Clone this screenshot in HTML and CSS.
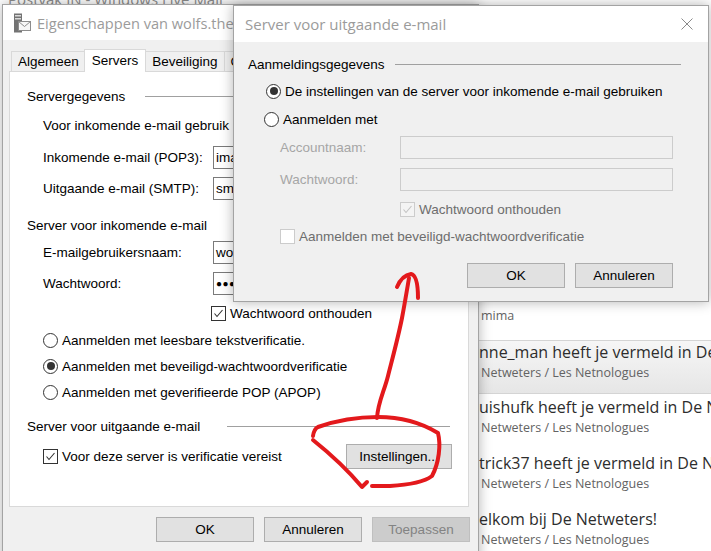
FILE: index.html
```html
<!DOCTYPE html>
<html lang="nl">
<head>
<meta charset="UTF-8" />
<title>Server voor uitgaande e-mail</title>
<link rel="stylesheet" href="styles.css">
</head>
<body>

<div class="mail-app">
  <div class="mail-title">Postvak IN - Windows Live Mail</div>
  <div class="feed">
    <div class="feed-item first"><div class="feed-sub">mima</div></div>
    <div class="feed-item hover">
      <div class="feed-title">nne_man heeft je vermeld in De</div>
      <div class="feed-sub">Netweters / Les Netnologues</div>
    </div>
    <div class="feed-item">
      <div class="feed-title">uishufk heeft je vermeld in De N</div>
      <div class="feed-sub">Netweters / Les Netnologues</div>
    </div>
    <div class="feed-item">
      <div class="feed-title">trick37 heeft je vermeld in De N</div>
      <div class="feed-sub">Netweters / Les Netnologues</div>
    </div>
    <div class="feed-item">
      <div class="feed-title">elkom bij De Netweters!</div>
      <div class="feed-sub">Netweters / Les Netnologues</div>
    </div>
  </div>
</div>

<div class="win props">
  <div class="titlebar">
    <svg class="app-icon" width="18" height="20" viewBox="0 0 18 20">
      <rect x="1" y="0.5" width="8" height="19" fill="#737373"/>
      <rect x="2" y="2" width="6" height="1.5" fill="#dadada"/>
      <rect x="2" y="5" width="6" height="1.5" fill="#dadada"/>
      <rect x="5.5" y="8.5" width="12" height="9" fill="#f6f6f6" stroke="#8c8c8c"/>
      <polyline points="5.5,8.5 11.5,13.5 17.5,8.5" fill="none" stroke="#8c8c8c"/>
    </svg>
    <span>Eigenschappen van wolfs.theo@telenet.be</span>
  </div>
  <div class="props-body">
    <div class="tabs">
      <div class="tab">Algemeen</div>
      <div class="tab active">Servers</div>
      <div class="tab">Beveiliging</div>
      <div class="tab">Geavanceerd</div>
    </div>
    <div class="tab-panel">
      <div class="group-head"><span>Servergegevens</span><span class="rule"></span></div>
      <div class="row indent mt5">Voor inkomende e-mail gebruik ik een POP3-server.</div>
      <div class="row indent mt8">
        <span class="label">Inkomende e-mail (POP3):</span>
        <span class="textbox">imap.telenet.be</span>
      </div>
      <div class="row indent mt7">
        <span class="label">Uitgaande e-mail (SMTP):</span>
        <span class="textbox">smtp.telenet.be</span>
      </div>
      <div class="group-head mt13"><span>Server voor inkomende e-mail</span></div>
      <div class="row indent mt3">
        <span class="label">E-mailgebruikersnaam:</span>
        <span class="textbox">wolfs.theo</span>
      </div>
      <div class="row indent mt7">
        <span class="label">Wachtwoord:</span>
        <span class="textbox dots">●●●●●●●●</span>
      </div>
      <div class="row remember mt6">
        <span class="check"><svg width="13" height="13" viewBox="0 0 13 13"><polyline points="2.5,6.5 5,9.5 10.5,3" /></svg></span>
        Wachtwoord onthouden
      </div>
      <div class="row indent mt3"><span class="radio"></span>Aanmelden met leesbare tekstverificatie.</div>
      <div class="row indent mt2"><span class="radio on"></span>Aanmelden met beveiligd-wachtwoordverificatie</div>
      <div class="row indent mt2"><span class="radio"></span>Aanmelden met geverifieerde POP (APOP)</div>
      <div class="group-head mt10"><span>Server voor uitgaande e-mail</span><span class="rule wide"></span></div>
      <div class="row indent mt6">
        <span class="check"><svg width="13" height="13" viewBox="0 0 13 13"><polyline points="2.5,6.5 5,9.5 10.5,3" /></svg></span>
        Voor deze server is verificatie vereist
        <button class="btn settings">Instellingen...</button>
      </div>
    </div>
    <div class="btn-row props-buttons">
      <button class="btn">OK</button>
      <button class="btn">Annuleren</button>
      <button class="btn" disabled>Toepassen</button>
    </div>
  </div>
</div>

<div class="win smtp">
  <div class="titlebar">
    <span>Server voor uitgaande e-mail</span>
    <svg class="close" width="12" height="12" viewBox="0 0 12 12">
      <path d="M0.5 0.5 L11.5 11.5 M11.5 0.5 L0.5 11.5" stroke="#8a8a8a" stroke-width="1"/>
    </svg>
  </div>
  <div class="smtp-body">
    <div class="group-head"><span>Aanmeldingsgegevens</span><span class="rule"></span></div>
    <div class="row opt-a mt3"><span class="radio on"></span>De instellingen van de server voor inkomende e-mail gebruiken</div>
    <div class="row opt-b mt4"><span class="radio"></span>Aanmelden met</div>
    <div class="field mt5">
      <span class="label">Accountnaam:</span>
      <span class="textbox off"></span>
    </div>
    <div class="field mt9">
      <span class="label">Wachtwoord:</span>
      <span class="textbox off"></span>
    </div>
    <div class="row dim keep mt6">
      <span class="check off"><svg width="13" height="13" viewBox="0 0 13 13"><polyline points="2.5,6.5 5,9.5 10.5,3" /></svg></span>
      Wachtwoord onthouden
    </div>
    <div class="row dim spa mt3">
      <span class="check blank"></span>
      Aanmelden met beveiligd-wachtwoordverificatie
    </div>
    <div class="btn-row mt15">
      <button class="btn">OK</button>
      <button class="btn">Annuleren</button>
    </div>
  </div>
</div>

<svg class="scribble" width="711" height="551" viewBox="0 0 711 551">
  <g fill="none" stroke="#e3191c" stroke-width="4" stroke-linecap="round" stroke-linejoin="round">
    <path d="M377 418 C378 402 384 392 388 376 C392 360 398 338 402 318 C405 302 407 290 409 278"/>
    <path d="M397 287 C400 280 404 275 411 274 C416 275 418 283 418 298"/>
    <path d="M313 436 Q314 429 318 427 C335 421 356 417 378 417 C400 417 420 422 438 433 C441 445 439 463 432 476 C424 482 408 485 390 486 L372 486"/>
    <path d="M313 440 C328 452 346 468 362 487 L367 482"/>
  </g>
</svg>

</body>
</html>
```

FILE: styles.css
```css
* {
  box-sizing: border-box;
}

body {
  margin: 0;
  width: 711px;
  height: 551px;
  position: relative;
  overflow: hidden;
  background: #fff;
  font-family: 'Liberation Sans', Arial, sans-serif;
  font-size: 13.5px;
  color: #000;
}

/* mail client in the background */
.mail-app {
  position: absolute;
  top: 0; left: 0; right: 0; bottom: 0;
  background: #fff;
}
.mail-title {
  position: absolute;
  top: -11px;
  left: 8px;
  font-family: 'Open Sans', sans-serif;
  font-size: 15px;
  color: #8c8c8c;
}
.feed {
  position: absolute;
  left: 478px;
  top: 302px;
  right: 0;
  overflow: hidden;
  font-family: 'Open Sans', sans-serif;
  white-space: nowrap;
}
.feed-item {
  padding: 2px 0 12px 1px;
}
.feed-item.first {
  padding: 4px 0 14px 1px;
}
.feed-item.hover {
  padding: 0 0 10px 1px;
  border-top: 1px solid #d4d4d4;
  border-bottom: 1px solid #d4d4d4;
  background: linear-gradient(#f6f6f6, #e6e6e6);
}
.feed-title {
  height: 22px;
  line-height: 22px;
  font-size: 16px;
  color: #2d2d2d;
  overflow: hidden;
}
.feed-sub {
  height: 20px;
  line-height: 20px;
  font-size: 12.5px;
  color: #636363;
  padding-left: 2px;
}

/* dialog windows */
.win {
  position: absolute;
  background: #f0f0f0;
  border: 1px solid #a3a3a3;
  box-shadow: 0 0 12px rgba(0, 0, 0, 0.3);
}
.props {
  left: 2px;
  top: 4px;
  width: 477px;
  height: 560px;
  z-index: 1;
}
.smtp {
  left: 233px;
  top: 5px;
  width: 476px;
  height: 297px;
  z-index: 2;
}

.titlebar {
  display: flex;
  align-items: center;
  background: #fff;
  font-family: 'Open Sans', sans-serif;
  font-size: 15px;
  color: #9b9b9b;
  white-space: nowrap;
  overflow: hidden;
}
.props .titlebar {
  height: 35px;
  padding-left: 10px;
  gap: 6px;
  font-size: 14.6px;
}
.smtp .titlebar {
  height: 36px;
  padding: 0 15px 0 11px;
  justify-content: space-between;
}
.app-icon,
.close {
  flex: none;
}

/* tabs */
.props-body {
  padding: 9px 9px 0 6px;
}
.tabs {
  display: flex;
  align-items: flex-end;
  height: 22px;
  padding-left: 2px;
  position: relative;
  z-index: 1;
}
.tab {
  height: 20px;
  padding: 0 6px;
  display: flex;
  align-items: center;
  border: 1px solid #d9d9d9;
  border-bottom: none;
  background: #f0f0f0;
  margin-right: -1px;
  white-space: nowrap;
}
.tab.active {
  height: 23px;
  margin: 0 -1px -1px -1px;
  padding: 0 7px 2px;
  background: #fff;
  position: relative;
  z-index: 1;
}

.tab-panel {
  height: 436px;
  background: #fff;
  border: 1px solid #d9d9d9;
  padding: 12px 15px 0 17px;
}

/* rows */
.row,
.group-head {
  display: flex;
  align-items: center;
  height: 24px;
  white-space: nowrap;
}
.rule {
  flex: 1;
  height: 1px;
  background: #a0a0a0;
}
.tab-panel .rule {
  margin: 0 3px 0 20px;
}
.tab-panel .rule.wide {
  margin-left: 27px;
}
.indent {
  margin-left: 16px;
}
.remember {
  margin-left: 184px;
}

.mt2 { margin-top: 2px; }
.mt3 { margin-top: 3px; }
.mt4 { margin-top: 4px; }
.mt5 { margin-top: 5px; }
.mt6 { margin-top: 6px; }
.mt7 { margin-top: 7px; }
.mt8 { margin-top: 8px; }
.mt9 { margin-top: 9px; }
.mt10 { margin-top: 10px; }
.mt13 { margin-top: 13px; }
.mt15 { margin-top: 15px; }

.label {
  width: 170px;
  flex: none;
}
.textbox {
  width: 240px;
  height: 23px;
  flex: none;
  display: flex;
  align-items: center;
  padding: 0 2px;
  border: 1px solid #7a7a7a;
  background: #fff;
  overflow: hidden;
}
.textbox.dots {
  font-size: 10px;
  letter-spacing: 0.5px;
}

/* radio buttons and check boxes */
.radio {
  width: 15px;
  height: 15px;
  flex: none;
  margin-right: 4px;
  border: 1px solid #333;
  border-radius: 50%;
  background: #fff;
  display: flex;
  align-items: center;
  justify-content: center;
}
.radio.on::after {
  content: '';
  width: 8px;
  height: 8px;
  border-radius: 50%;
  background: #333;
}
.check {
  width: 15px;
  height: 15px;
  flex: none;
  margin-right: 4px;
  border: 1px solid #333;
  background: #fff;
}
.check svg {
  display: block;
}
.check polyline {
  fill: none;
  stroke: #333;
  stroke-width: 1.1;
}
.check.off {
  border-color: #cccccc;
  background: #f4f4f4;
}
.check.off polyline {
  stroke: #c2c2c2;
}
.check.blank {
  border-color: #cccccc;
}

/* buttons */
.btn {
  width: 98px;
  height: 25px;
  padding: 0;
  border: 1px solid #adadad;
  background: #e1e1e1;
  font: inherit;
  color: #000;
}
.btn:disabled {
  background: #cccccc;
  border-color: #bfbfbf;
  color: #838383;
}
.btn-row {
  display: flex;
  justify-content: flex-end;
  gap: 10px;
}
.props-buttons {
  margin: 10px -1px 0 0;
}
.settings {
  width: 106px;
  margin: 0 1px 0 auto;
}

/* outgoing server dialog */
.smtp-body {
  padding: 10px 35px 0 14px;
}
.smtp-body .group-head {
  margin-right: -8px;
}
.smtp-body .rule {
  margin-left: 10px;
}
.opt-a {
  margin-left: 18px;
}
.opt-b {
  margin-left: 16px;
}
.field {
  display: flex;
  align-items: center;
  height: 23px;
  margin-left: 32px;
}
.field .label {
  width: 120px;
  color: #a6a6a6;
}
.field .textbox.off {
  width: auto;
  flex: 1;
  border-color: #cccccc;
  background: #f0f0f0;
}
.dim {
  color: #6d6d6d;
}
.keep {
  margin-left: 152px;
}
.spa {
  margin-left: 32px;
}

/* red pen marks */
.scribble {
  position: absolute;
  top: 0;
  left: 0;
  z-index: 3;
  pointer-events: none;
}
```
